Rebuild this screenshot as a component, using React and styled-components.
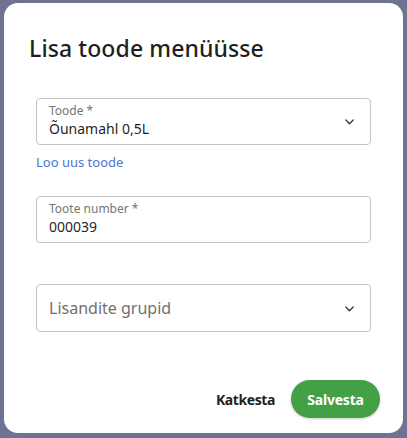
import React from "react";
import styled, { createGlobalStyle } from "styled-components";

const Global = createGlobalStyle`
  html, body { margin: 0; padding: 0; }
  body {
    background: #6f7290;
    font-family: "Noto Sans", "Open Sans", sans-serif;
    width: 407px;
    height: 438px;
    overflow: hidden;
  }
`;

const Backdrop = styled.div`
  width: 407px;
  height: 438px;
  padding: 3px 4px 5px 4px;
  box-sizing: border-box;
`;

const Dialog = styled.div`
  background: #fff;
  border-radius: 14px;
  height: 100%;
  box-sizing: border-box;
  padding: 30px 32px 0 25px;
  display: flex;
  flex-direction: column;
`;

const Title = styled.h2`
  margin: 0;
  font-size: 23px;
  font-weight: 500;
  color: #1f1f1f;
  letter-spacing: 0.1px;
  line-height: 30px;
`;

const Form = styled.div`
  margin-top: 35px;
  padding-left: 7px;
  display: flex;
  flex-direction: column;
`;

const Field = styled.div`
  height: ${p => p.$h || 47}px;
  border: 1px solid #c4c4c4;
  border-radius: 4px;
  box-sizing: border-box;
  display: flex;
  align-items: center;
  padding: 0 14px 0 12px;
  margin-top: ${p => p.$mt || 0}px;
`;

const FieldBody = styled.div`
  flex: 1;
  display: flex;
  flex-direction: column;
`;

const Label = styled.span`
  font-size: 12px;
  color: #767676;
  line-height: 14px;
`;

const Value = styled.span`
  font-size: 14px;
  color: #1f1f1f;
  line-height: 20px;
  margin-top: 1px;
`;

const Placeholder = styled.span`
  font-size: 16px;
  color: #707070;
`;

const Link = styled.a`
  font-size: 13px;
  color: #4a76d4;
  margin-top: 8px;
  line-height: 18px;
  text-decoration: none;
`;

const Footer = styled.div`
  margin-top: auto;
  margin-bottom: 15px;
  display: flex;
  justify-content: flex-end;
  align-items: center;
  gap: 16px;
  margin-right: -9px;
`;

const TextButton = styled.button`
  background: none;
  border: none;
  font-family: inherit;
  font-size: 14px;
  font-weight: 700;
  color: #1f1f1f;
  padding: 0;
  letter-spacing: -0.4px;
`;

const PrimaryButton = styled.button`
  background: #43a047;
  color: #fff;
  border: none;
  border-radius: 19px;
  height: 38px;
  width: 89px;
  font-family: inherit;
  font-size: 14px;
  font-weight: 700;
  letter-spacing: -0.2px;
  box-shadow: 0 1px 3px rgba(0,0,0,0.2);
`;

const Chevron = () => (
  <svg width="13" height="13" viewBox="0 0 24 24" fill="none" stroke="#333" strokeWidth="2.6" strokeLinecap="round" strokeLinejoin="round">
    <polyline points="5 9 12 16 19 9" />
  </svg>
);

export default function App() {
  return (
    <>
      <Global />
      <Backdrop>
        <Dialog>
          <Title>Lisa toode menüüsse</Title>
          <Form>
            <Field>
              <FieldBody>
                <Label>Toode *</Label>
                <Value>Õunamahl 0,5L</Value>
              </FieldBody>
              <Chevron />
            </Field>
            <Link href="#">Loo uus toode</Link>
            <Field $mt={25}>
              <FieldBody>
                <Label>Toote number *</Label>
                <Value>000039</Value>
              </FieldBody>
            </Field>
            <Field $mt={41} $h={48}>
              <FieldBody>
                <Placeholder>Lisandite grupid</Placeholder>
              </FieldBody>
              <Chevron />
            </Field>
          </Form>
          <Footer>
            <TextButton>Katkesta</TextButton>
            <PrimaryButton>Salvesta</PrimaryButton>
          </Footer>
        </Dialog>
      </Backdrop>
    </>
  );
}
